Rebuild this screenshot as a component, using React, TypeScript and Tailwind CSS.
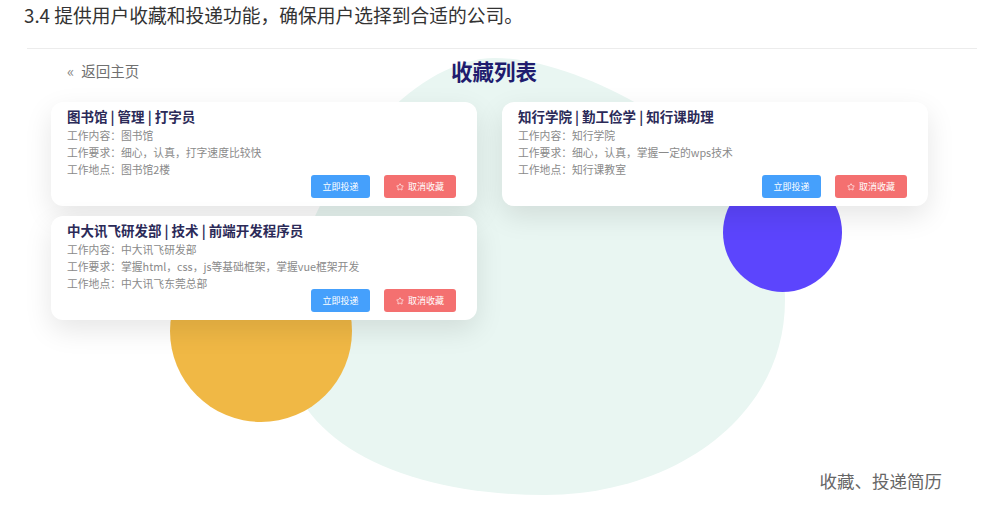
import React from "react";
import { Star } from "lucide-react";

const FONT = { fontFamily: '"Noto Sans CJK SC", "Noto Sans", sans-serif' };

interface Job {
  title: string;
  content: string;
  require: string;
  place: string;
}

const jobs: Job[] = [
  { title: "图书馆 | 管理 | 打字员", content: "图书馆", require: "细心，认真，打字速度比较快", place: "图书馆2楼" },
  { title: "知行学院 | 勤工俭学 | 知行课助理", content: "知行学院", require: "细心，认真，掌握一定的wps技术", place: "知行课教室" },
  { title: "中大讯飞研发部 | 技术 | 前端开发程序员", content: "中大讯飞研发部", require: "掌握html，css，js等基础框架，掌握vue框架开发", place: "中大讯飞东莞总部" },
];

function JobCard({ job }: { job: Job }) {
  return (
    <div className="w-[426px] rounded-[12px] bg-white pl-[16px] pr-[21px] pt-[5px] pb-[8px] shadow-[0_10px_28px_rgba(0,0,0,0.10)] flex flex-col">
      <div className="text-[13.5px] leading-[18px] font-bold text-[#2b2a58]">{job.title}</div>
      <div className="mt-[2px] text-[10.8px] leading-[17px] text-[#8a8a8a]">
        <div>工作内容：{job.content}</div>
        <div>工作要求：{job.require}</div>
        <div>工作地点：{job.place}</div>
      </div>
      <div className="-mt-[3px] flex justify-end gap-[14px]">
        <button className="w-[59px] h-[23px] rounded-[3px] bg-[#45a0fc] text-white text-[9px]">立即投递</button>
        <button className="w-[72px] h-[23px] rounded-[3px] bg-[#f47070] text-white text-[9px] flex items-center justify-center gap-[4px]">
          <Star size={8} strokeWidth={2} />
          取消收藏
        </button>
      </div>
    </div>
  );
}

export default function App() {
  return (
    <div className="w-[1002px] h-[508px] bg-white overflow-hidden" style={FONT}>
      <p className="pl-[24px] pt-[2px] text-[18.75px] leading-[26px] text-[#333]">
        3.4 提供用户收藏和投递功能，确保用户选择到合适的公司。
      </p>
      <div className="mt-[20px] ml-[27px] w-[950px] h-px bg-[#ececec]" />

      {/* screenshot area */}
      <div className="relative ml-[27px] w-[950px] h-[459px]">
        {/* background blobs */}
        <svg className="absolute inset-0" width="950" height="459" viewBox="27 49 950 459">
          <path
            d="M495 58 C590 58 785 165 785 300 C785 420 670 495 545 495 C400 495 285 440 285 340 C285 210 400 58 495 58 Z"
            fill="#e9f6f2"
          />
        </svg>
        <div className="absolute left-[143px] top-[191px] w-[182px] h-[182px] rounded-full bg-[#f0b845]" />
        <div className="absolute left-[696px] top-[124px] w-[119px] h-[119px] rounded-full bg-[#5c45fd]" />

        <div className="relative">
          <div className="h-[44px] flex items-center pl-[40px]">
            <span className="text-[14.5px] text-[#707070] w-[384px] flex items-center">
              <span className="text-[15px] text-[#888] mr-[7px]">«</span>
              返回主页
            </span>
            <span className="text-[21.5px] font-bold text-[#1f1c6e]">收藏列表</span>
          </div>
          <div className="mt-[9px] pl-[24px] flex gap-[25px] items-start">
            <div className="flex flex-col gap-[10px]">
              <JobCard job={jobs[0]} />
              <JobCard job={jobs[2]} />
            </div>
            <JobCard job={jobs[1]} />
          </div>
          <div className="mt-[149px] flex justify-end pr-[35px]">
            <span className="text-[17.5px] leading-[24px] text-[#666]">收藏、投递简历</span>
          </div>
        </div>
      </div>
    </div>
  );
}
